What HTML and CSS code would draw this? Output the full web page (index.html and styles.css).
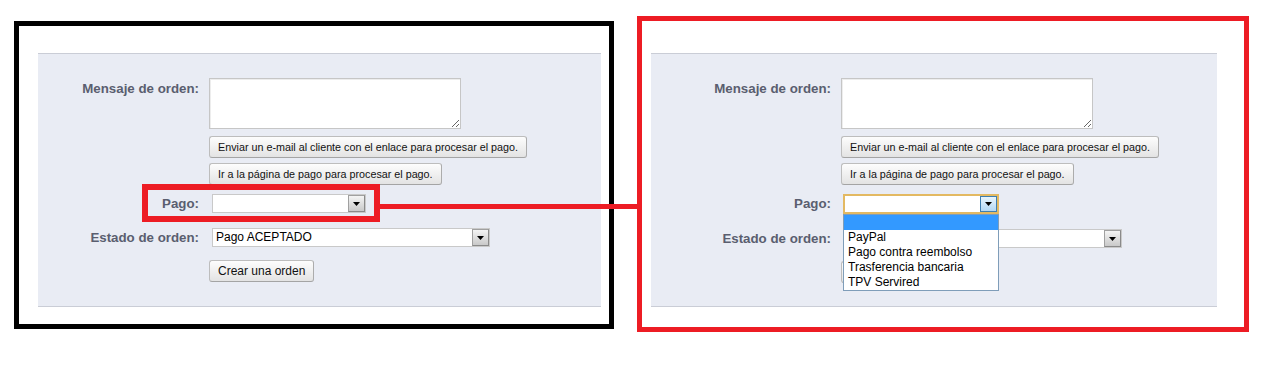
FILE: index.html
```html
<!DOCTYPE html>
<html>
<head>
  <title>Pago: selector de método</title>
  <meta name="viewport" content="width=device-width, initial-scale=1.0">
  <link rel="stylesheet" href="styles.css">
</head>
<body>

<div class="stage">

  <!-- before: closed payment select -->
  <div class="frame frame-black">
    <div class="panel">
      <div class="row row-top">
        <label class="label label-top">Mensaje de orden:</label>
        <textarea class="message"></textarea>
      </div>
      <div class="row row-send">
        <span class="label"></span>
        <button class="btn">Enviar un e-mail al cliente con el enlace para procesar el pago.</button>
      </div>
      <div class="row row-go">
        <span class="label"></span>
        <button class="btn">Ir a la página de pago para procesar el pago.</button>
      </div>
      <div class="row row-pay">
        <label class="label">Pago:</label>
        <div class="select select-pay">
          <span class="value"></span>
          <span class="arrow"><svg width="7" height="4" viewBox="0 0 7 4"><polygon points="0,0 7,0 3.5,4" fill="#000"/></svg></span>
        </div>
      </div>
      <div class="row row-state">
        <label class="label">Estado de orden:</label>
        <div class="select select-state">
          <span class="value">Pago ACEPTADO</span>
          <span class="arrow"><svg width="7" height="4" viewBox="0 0 7 4"><polygon points="0,0 7,0 3.5,4" fill="#000"/></svg></span>
        </div>
      </div>
      <div class="row row-create">
        <span class="label"></span>
        <button class="btn btn-create">Crear una orden</button>
      </div>
    </div>
  </div>

  <!-- after: payment select opened -->
  <div class="frame frame-red">
    <div class="panel panel-wide">
      <div class="row row-top">
        <label class="label label-top">Mensaje de orden:</label>
        <textarea class="message"></textarea>
      </div>
      <div class="row row-send">
        <span class="label"></span>
        <button class="btn">Enviar un e-mail al cliente con el enlace para procesar el pago.</button>
      </div>
      <div class="row row-go">
        <span class="label"></span>
        <button class="btn">Ir a la página de pago para procesar el pago.</button>
      </div>
      <div class="row row-pay">
        <label class="label">Pago:</label>
        <div class="select select-pay is-open">
          <span class="value"></span>
          <span class="arrow"><svg width="7" height="4" viewBox="0 0 7 4"><polygon points="0,0 7,0 3.5,4" fill="#000"/></svg></span>
          <ul class="options">
            <li class="option is-hover">&nbsp;</li>
            <li class="option">PayPal</li>
            <li class="option">Pago contra reembolso</li>
            <li class="option">Trasferencia bancaria</li>
            <li class="option">TPV Servired</li>
          </ul>
        </div>
      </div>
      <div class="row row-state">
        <label class="label">Estado de orden:</label>
        <!-- value and button sit under the open list -->
        <div class="select select-state">
          <span class="value is-covered">Pago ACEPTADO</span>
          <span class="arrow"><svg width="7" height="4" viewBox="0 0 7 4"><polygon points="0,0 7,0 3.5,4" fill="#000"/></svg></span>
        </div>
      </div>
      <div class="row row-create">
        <span class="label"></span>
        <button class="btn btn-create"><span class="is-covered">Crear una orden</span></button>
      </div>
    </div>
  </div>

  <!-- annotation marks drawn over the screenshots -->
  <div class="mark-box"></div>
  <div class="mark-line"></div>

</div>

</body>
</html>
```

FILE: styles.css
```css
body {
  margin: 0;
  background-color: #fff;
  font-family: "Liberation Sans", Arial, sans-serif;
}
.stage {
  position: relative;
  display: flex;
  align-items: flex-start;
  height: 365px;
}
.frame {
  box-sizing: border-box;
  border: 5px solid #000;
}
.frame-black {
  margin: 21px 0 0 14px;
  width: 600px;
  height: 308px;
  padding: 27px 0 0 19px;
}
.frame-red {
  margin: 16px 0 0 23px;
  width: 612px;
  height: 316px;
  padding: 32px 0 0 9px;
  border-color: #ed1c24;
}

.panel {
  box-sizing: border-box;
  width: 563px;
  height: 254px;
  padding-top: 24px;
  background-color: #e9ecf4;
  border-top: 1px solid #cacdd6;
  border-bottom: 1px solid #cacdd6;
}
.panel-wide {
  width: 566px;
}

.row {
  display: flex;
  align-items: center;
  gap: 10px;
}
.row-top { align-items: flex-start; }
.row-send { margin-top: 7px; }
.row-go { margin-top: 5px; }
.row-pay { margin-top: 9px; }
.row-state { margin-top: 15px; }
.row-create { margin-top: 13px; }

.label {
  flex: none;
  width: 161px;
  text-align: right;
  font-size: 13.3px;
  line-height: 16px;
  font-weight: bold;
  color: #5a5e6f;
}
.panel-wide .label {
  width: 180px;
}
.label-top {
  padding-top: 3px;
}

.message {
  box-sizing: border-box;
  width: 252px;
  height: 51px;
  margin: 0;
  border: 1px solid #c6c6c6;
  box-shadow: inset 1px 1px 0 #ededed;
  background-color: #fff;
  resize: both;
}

.btn {
  box-sizing: border-box;
  height: 22px;
  margin: 0;
  padding: 0 8px;
  font-family: "Liberation Sans", Arial, sans-serif;
  font-size: 10.75px;
  color: #111;
  background: linear-gradient(#fdfdfd, #e3e3e3);
  border: 1px solid #bdbdbd;
  border-bottom-color: #a4a4a4;
  border-right-color: #acacac;
  border-radius: 3px;
}
.btn-create {
  font-size: 12px;
}

.select {
  position: relative;
  box-sizing: border-box;
  display: flex;
  height: 19px;
  margin-left: 3px;
  border: 1px solid #c9c9c9;
  background-color: #fff;
}
.select-pay { width: 154px; }
.select-state { width: 278px; }
.select .value {
  flex: 1;
  padding-left: 3px;
  font-size: 12px;
  line-height: 17px;
  color: #000;
}
.select .arrow {
  box-sizing: border-box;
  display: flex;
  align-items: center;
  justify-content: center;
  width: 17px;
  height: 17px;
  border: 1px solid #8a8a8a;
  border-top-color: #a0a0a0;
  border-left-color: #a0a0a0;
  background: linear-gradient(#f4f4f4, #c9c9c9);
}

.select.is-open {
  width: 156px;
  height: 20px;
  margin: 0 0 0 2px;
  border: 2px solid #e3b962;
}
.select.is-open .value {
  line-height: 16px;
}
.select.is-open .arrow {
  height: 16px;
  border-color: #3f7fb0;
  background: linear-gradient(#e8f5fd, #b3d8f4);
}

/* text hidden behind the open list in the screenshot */
.is-covered {
  visibility: hidden;
}

.options {
  position: absolute;
  z-index: 2;
  top: calc(100% + 2px);
  left: -2px;
  box-sizing: border-box;
  width: 156px;
  margin: 0;
  padding: 0;
  list-style: none;
  background-color: #fff;
  border: 1px solid #7f9db9;
}
.option {
  height: 15px;
  padding: 0 4px;
  font-size: 12px;
  line-height: 15px;
  color: #000;
  white-space: nowrap;
}
.option.is-hover {
  background-color: #3399ff;
}

.mark-box {
  position: absolute;
  left: 142px;
  top: 184px;
  width: 238px;
  height: 38px;
  box-sizing: border-box;
  border: 6px solid #ed1c24;
}
.mark-line {
  position: absolute;
  left: 380px;
  top: 204px;
  width: 257px;
  height: 5px;
  background-color: #ed1c24;
}
```
